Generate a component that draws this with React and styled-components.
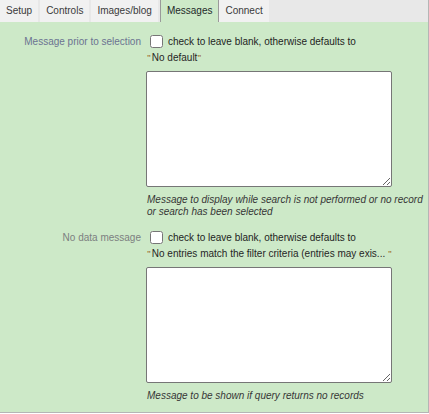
import React from "react";
import styled, { createGlobalStyle } from "styled-components";

const Global = createGlobalStyle`
  html, body { margin: 0; padding: 0; background: #ffffff; }
  body { font-family: "Liberation Sans", Arial, sans-serif; }
`;

const Frame = styled.div`
  width: 429px;
  height: 413px;
  display: flex;
  flex-direction: column;
  font-family: "Liberation Sans", Arial, sans-serif;
  font-size: 10px;
`;

const TabBar = styled.div`
  display: flex;
  height: 22px;
  background: #e8e8e8;
  border-right: 1px solid #b5b5b5;
  box-sizing: border-box;
`;

const Tab = styled.div`
  display: flex;
  align-items: center;
  padding: 0 6px 2px;
  margin-right: ${(p) => (p.$active ? "0" : "2px")};
  background: ${(p) => (p.$active ? "#cde9c8" : "#f1f1f1")};
  color: ${(p) => (p.$active ? "#1e2a2a" : "#3a3a3a")};
  border-left: ${(p) => (p.$active ? "1px solid #9a9a9a" : "none")};
  border-right: ${(p) => (p.$active ? "1px solid #9a9a9a" : "none")};
  height: 22px;
  box-sizing: border-box;
`;

const Panel = styled.div`
  flex: 1;
  background: #cde9c8;
  border-right: 1px solid #b5b5b5;
  border-bottom: 1px solid #b5b5b5;
  padding-top: 10px;
  display: flex;
  flex-direction: column;
  gap: 10px;
`;

const Section = styled.div`
  display: grid;
  grid-template-columns: 141px 1fr;
  column-gap: 5px;
`;

const Label = styled.div`
  height: 19px;
  display: flex;
  align-items: center;
  justify-content: flex-end;
  color: ${(p) => p.$color};
`;

const Field = styled.div`
  display: flex;
  flex-direction: column;
  padding-right: 4px;
`;

const CheckLine = styled.label`
  display: flex;
  align-items: center;
  height: 19px;
  color: #1e1e1e;
`;

const Check = styled.input`
  width: 13px;
  height: 13px;
  margin: 3px 5px 3px 4px;
`;

const DefaultText = styled.div`
  height: 14px;
  line-height: 14px;
  color: #262626;
  padding-left: 1px;
`;

const Quote = styled.span`
  font-size: 8px;
  font-weight: bold;
  color: #a0783a;
  vertical-align: 1px;
  margin: 0 1px 0 0;
`;

const Area = styled.textarea`
  display: block;
  box-sizing: border-box;
  width: 246px;
  height: 116px;
  margin: 6px 0 0 0;
  border: 1px solid #767676;
  border-radius: 2px;
  background: #ffffff;
  font-family: "Liberation Sans", Arial, sans-serif;
  font-size: 10px;
`;

const Help = styled.div`
  margin-top: 7px;
  font-style: italic;
  line-height: 12px;
  color: #363636;
  padding-left: 1px;
`;

const tabs = ["Setup", "Controls", "Images/blog", "Messages", "Connect"];

const sections = [
  {
    label: "Message prior to selection",
    color: "#6b7391",
    def: "No default",
    help: "Message to display while search is not performed or no record or search has been selected",
  },
  {
    label: "No data message",
    color: "#7c8080",
    def: "No entries match the filter criteria (entries may exis... ",
    help: "Message to be shown if query returns no records",
  },
];

export default function App() {
  return (
    <>
      <Global />
      <Frame>
        <TabBar>
          {tabs.map((t) => (
            <Tab key={t} $active={t === "Messages"}>
              {t}
            </Tab>
          ))}
        </TabBar>
        <Panel>
          {sections.map((s) => (
            <Section key={s.label}>
              <Label $color={s.color}>{s.label}</Label>
              <Field>
                <CheckLine>
                  <Check type="checkbox" />
                  check to leave blank, otherwise defaults to
                </CheckLine>
                <DefaultText>
                  <Quote>"</Quote>
                  {s.def}
                  <Quote>"</Quote>
                </DefaultText>
                <Area />
                <Help>{s.help}</Help>
              </Field>
            </Section>
          ))}
        </Panel>
      </Frame>
    </>
  );
}
